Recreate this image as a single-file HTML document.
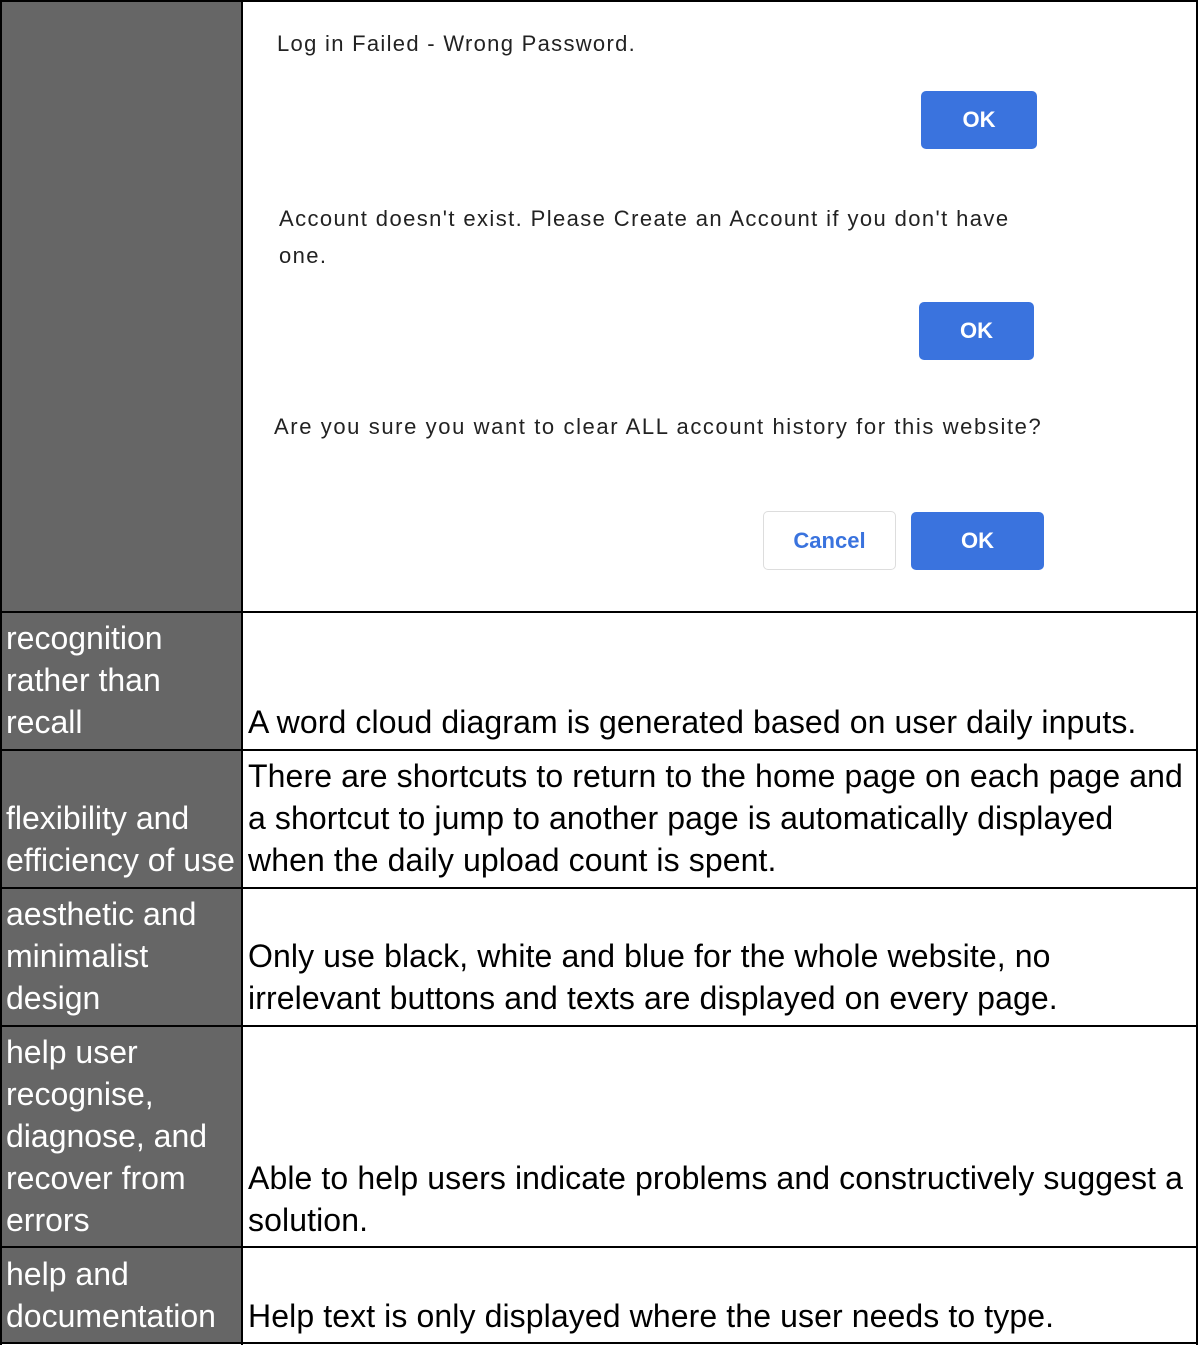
<!DOCTYPE html>
<html><head><style>
body{margin:0;width:1200px;height:1346px;background:#fff;position:relative;font-family:"Liberation Sans",Arial,sans-serif;overflow:hidden}
.a{position:absolute}
.g{background:#666;left:2px;width:240px}
.h{position:absolute;left:0;width:1198px;height:2px;background:#000}
.v{position:absolute;top:0;width:2px;height:1345px;background:#000}
.lt{position:absolute;left:6px;color:#fff;font-size:32px;line-height:42px;white-space:nowrap}
.rt{position:absolute;left:248px;color:#000;font-size:32px;line-height:42px;white-space:nowrap;letter-spacing:0.1px}
.d{position:absolute;font-size:22px;letter-spacing:1.45px;color:#222;white-space:nowrap}
.b{position:absolute;background:#3a73de;color:#fff;border-radius:5px;font-weight:bold;font-size:22px;text-align:center;line-height:58px;height:58px}
</style></head><body>
<div class="a g" style="top:2px;height:1341px"></div>
<div class="h" style="top:0"></div>
<div class="h" style="top:611px"></div>
<div class="h" style="top:749px"></div>
<div class="h" style="top:887px"></div>
<div class="h" style="top:1025px"></div>
<div class="h" style="top:1246px"></div>
<div class="h" style="top:1342px"></div>
<div class="v" style="left:0"></div>
<div class="v" style="left:241px"></div>
<div class="v" style="left:1196px"></div>

<div class="d" style="left:277px;top:31px;letter-spacing:1.3px">Log in Failed - Wrong Password.</div>
<div class="b" style="left:921px;top:91px;width:116px">OK</div>
<div class="d" style="left:279px;top:200px;line-height:37px;letter-spacing:1.4px">Account doesn't exist. Please Create an Account if you don't have<br>one.</div>
<div class="b" style="left:919px;top:302px;width:115px">OK</div>
<div class="d" style="left:274px;top:414px;letter-spacing:1.6px">Are you sure you want to clear ALL account history for this website?</div>
<div class="a" style="left:763px;top:511px;width:131px;height:57px;border:1px solid #ddd;border-radius:5px;color:#3a73de;font-weight:bold;font-size:22px;text-align:center;line-height:57px">Cancel</div>
<div class="b" style="left:911px;top:512px;width:133px">OK</div>

<div class="lt" style="top:617px">recognition<br>rather than<br>recall</div>
<div class="rt" style="top:701px">A word cloud diagram is generated based on user daily inputs.</div>

<div class="lt" style="top:797px">flexibility and<br>efficiency of use</div>
<div class="rt" style="top:755px">There are shortcuts to return to the home page on each page and<br>a shortcut to jump to another page is automatically displayed<br>when the daily upload count is spent.</div>

<div class="lt" style="top:893px">aesthetic and<br>minimalist<br>design</div>
<div class="rt" style="top:935px">Only use black, white and blue for the whole website, no<br>irrelevant buttons and texts are displayed on every page.</div>

<div class="lt" style="top:1031px">help user<br>recognise,<br>diagnose, and<br>recover from<br>errors</div>
<div class="rt" style="top:1157px">Able to help users indicate problems and constructively suggest a<br>solution.</div>

<div class="lt" style="top:1253px">help and<br>documentation</div>
<div class="rt" style="top:1295px">Help text is only displayed where the user needs to type.</div>
</body></html>
